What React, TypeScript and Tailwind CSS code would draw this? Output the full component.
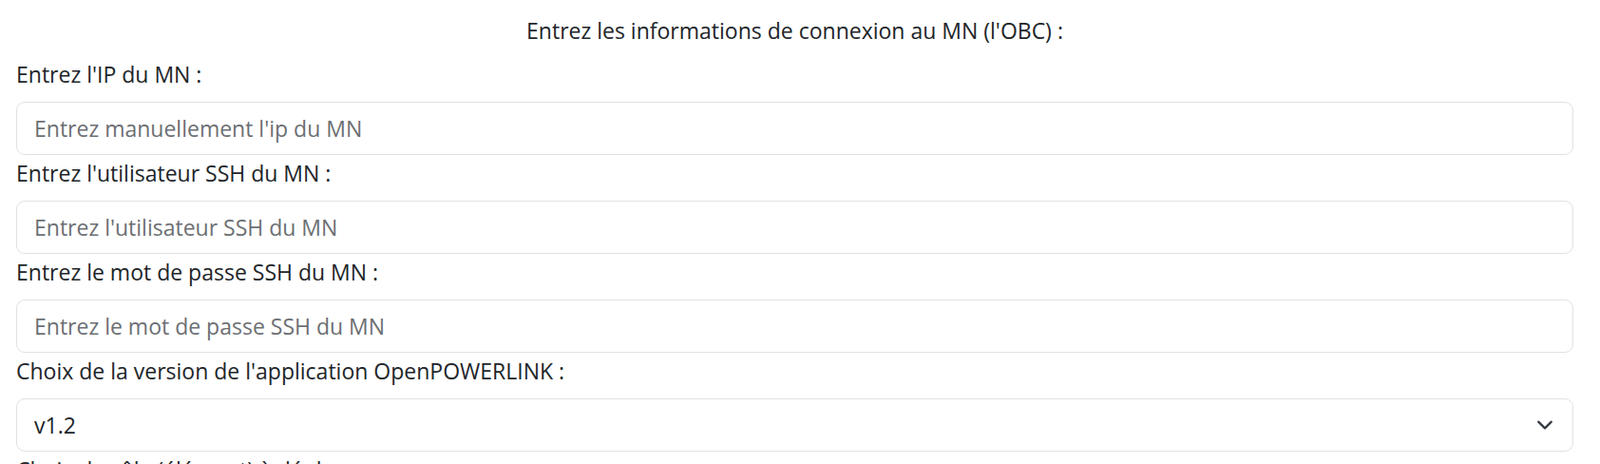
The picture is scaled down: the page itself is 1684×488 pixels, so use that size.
import React from "react";

const fields = [
  { label: "Entrez l'IP du MN :", placeholder: "Entrez manuellement l'ip du MN", type: "text" },
  { label: "Entrez l'utilisateur SSH du MN :", placeholder: "Entrez l'utilisateur SSH du MN", type: "text" },
  { label: "Entrez le mot de passe SSH du MN :", placeholder: "Entrez le mot de passe SSH du MN", type: "password" },
];

export default function App() {
  return (
    <div className="h-screen overflow-hidden bg-white pl-[17px] pr-[28px] pt-[14px] font-['Open_Sans',sans-serif] text-[23px] text-[#212529]">
      <p className="mb-[9px] text-center leading-[36px]">
        Entrez les informations de connexion au MN (l'OBC) :
      </p>
      {fields.map((f) => (
        <div key={f.label}>
          <label className="mb-[11px] block pt-[1px] leading-[36px]">{f.label}</label>
          <input
            type={f.type}
            placeholder={f.placeholder}
            className="block h-[56px] w-full rounded-[9px] border border-[#dee2e6] bg-white px-[18px] text-[23px] text-[#212529] outline-none placeholder:text-[#6c6f73]"
          />
        </div>
      ))}
      <label className="mb-[11px] block pt-[1px] leading-[36px]">
        Choix de la version de l'application OpenPOWERLINK :
      </label>
      <div className="relative">
        <select
          defaultValue="v1.2"
          className="block h-[56px] w-full appearance-none rounded-[9px] border border-[#dee2e6] bg-white px-[18px] text-[23px] text-[#212529] outline-none"
        >
          <option value="v1.2">v1.2</option>
          <option value="v2.7">v2.7</option>
        </select>
        <svg
          className="pointer-events-none absolute right-[21px] top-1/2 -translate-y-1/2"
          width="18"
          height="18"
          viewBox="0 0 16 16"
          fill="none"
          stroke="#343a40"
          strokeWidth="2"
          strokeLinecap="round"
          strokeLinejoin="round"
        >
          <path d="m2 5 6 6 6-6" />
        </svg>
      </div>
      <label className="block pt-[1px] leading-[36px]">Choix du rôle (élément) à déployer :</label>
    </div>
  );
}
